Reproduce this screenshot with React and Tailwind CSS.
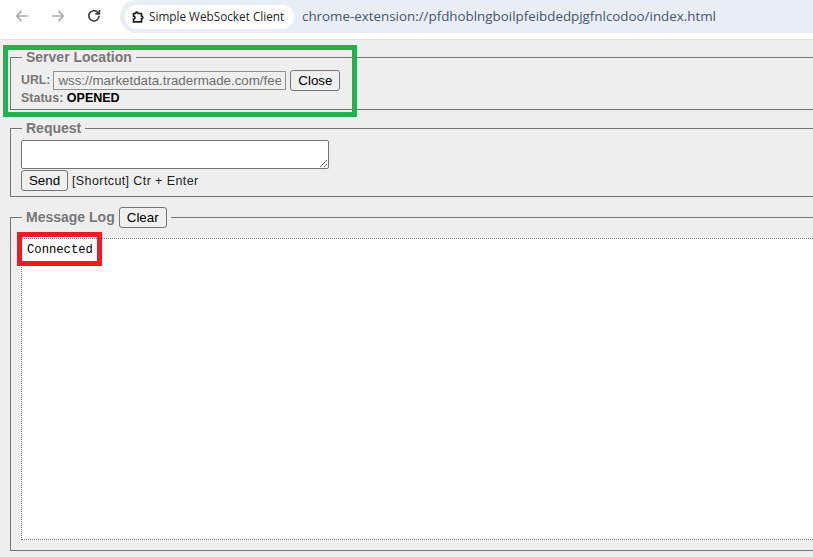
import React from "react";

const Btn = ({ children, className = "" }) => (
  <button className={"h-[21px] rounded-[3px] border border-[#767676] bg-[#efefef] text-[13.330px] leading-none text-black " + className}>
    {children}
  </button>
);

export default function App() {
  return (
    <div className="relative h-[557px] w-[813px] overflow-hidden bg-[#eeeeee] font-['Liberation_Sans',Arial,sans-serif]">
      <header className="flex h-[40px] items-start border-b border-[#e3e3e3] bg-white">
        <div className="flex h-[32px] w-[120px] items-center pl-[14px] text-[#a6a8ab]">
          <svg width="16" height="16" viewBox="0 0 18 18" fill="none" stroke="currentColor" strokeWidth="1.8">
            <path d="M16 9H3M8.500 3.500 3 9l5.500 5.500" />
          </svg>
          <svg className="ml-[20px]" width="16" height="16" viewBox="0 0 18 18" fill="none" stroke="currentColor" strokeWidth="1.8">
            <path d="M2 9h13M9.500 3.500 15 9l-5.500 5.500" />
          </svg>
          <svg className="ml-[20px] text-[#3c4043]" width="16" height="16" viewBox="0 0 18 18" fill="none" stroke="currentColor" strokeWidth="1.9">
            <path d="M14.700 8.800a5.800 5.800 0 1 1-1.700-4.100L15 6.500" />
            <path d="M15 2.200v4.500h-4.500" />
          </svg>
        </div>
        <div className="flex h-[33px] flex-1 items-center rounded-l-[17px] bg-[#e9edf6] pl-[5px]">
          <div className="flex h-[24px] w-[169px] items-center rounded-full bg-white pl-[6px] font-['Open_Sans',sans-serif] text-[11.750px] font-medium text-[#1f1f1f]">
            <svg className="mr-[4px] shrink-0" width="14" height="14" viewBox="0 0 14 14" fill="none" stroke="#1f1f1f" strokeWidth="1.700">
              <path d="M2.500 3.500h2a1.300 1.300 0 0 1 2.600 0h3.400v2.700a1.300 1.300 0 0 1 0 2.600v3H2.500v-2.600a1.500 1.500 0 0 0 0-3z" />
            </svg>
            Simple WebSocket Client
          </div>
          <span className="ml-[8px] whitespace-nowrap font-['Open_Sans',sans-serif] text-[13.370px] text-[#46566b]">
            chrome-extension://pfdhoblngboilpfeibdedpjgfnlcodoo/index.html
          </span>
        </div>
      </header>

      <main className="flex w-[900px] flex-col pl-[10px] pt-[8px]">
        <fieldset className="h-[62px] border border-[#767676] px-[10px]">
          <legend className="ml-[1px] px-[4px] text-[14px] font-bold leading-[18px] text-[#777777]">Server Location</legend>
          <div className="mt-[4px] flex h-[21px] items-center">
            <span className="text-[12.300px] font-bold text-[#777777]">URL:</span>
            <input
              readOnly
              value="wss://marketdata.tradermade.com/feedadv"
              className="ml-[3px] h-[19px] w-[233px] border border-[#8f8f8f] bg-[#efefef] px-[4px] text-[13.330px] leading-none text-[#6d6d6d] outline-none"
            />
            <Btn className="ml-[4px] w-[50px]">Close</Btn>
          </div>
          <div className="text-[12.500px] font-bold leading-[14px] text-[#777777]">
            Status: <span className="text-black">OPENED</span>
          </div>
        </fieldset>

        <fieldset className="mt-[9px] h-[78px] border border-[#767676] px-[10px]">
          <legend className="ml-[1px] px-[4px] text-[14px] font-bold leading-[18px] text-[#777777]">Request</legend>
          <textarea className="mt-[3px] block h-[29px] w-[308px] resize rounded-[2px] border border-[#767676] bg-white outline-none" />
          <div className="mt-[1px] flex items-center text-[12.500px] text-[#222222]">
            <Btn className="w-[47px]">Send</Btn>
            <span className="ml-[4px] pt-[1px] tracking-[0.4px]">[Shortcut] Ctr + Enter</span>
          </div>
        </fieldset>

        <fieldset className="mt-[10px] h-[344px] border border-[#767676] px-[10px]">
          <legend className="ml-[1px] flex h-[21px] items-center px-[4px] text-[14px] font-bold leading-[21px] text-[#777777]">
            Message Log
            <Btn className="ml-[4px] w-[48px] font-normal">Clear</Btn>
          </legend>
          <div className="mt-[10px] h-[302px] border border-dotted border-[#767676] bg-white px-[5px] pt-[3px] font-['Liberation_Mono',monospace] text-[12.200px] leading-[16px] text-black">
            Connected
          </div>
        </fieldset>
      </main>

      <div className="absolute left-[3px] top-[45px] h-[72px] w-[354px] border-[5px] border-[#22b14c]" />
      <div className="absolute left-[17px] top-[232px] h-[34px] w-[85px] border-[5px] border-[#ed1c24]" />
    </div>
  );
}
